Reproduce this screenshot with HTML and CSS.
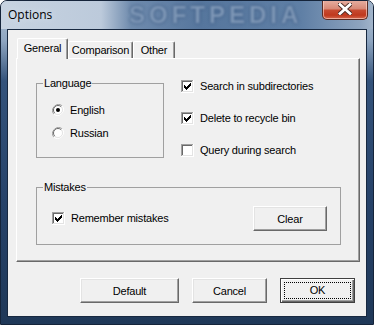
FILE: index.html
```html
<!DOCTYPE html>
<html lang="en">
<head>
    <meta charset="UTF-8">
    <title>Options</title>
    <link rel="stylesheet" href="styles.css">
</head>
<body>
    <div class="window">
        <div class="titlebar">
            <span class="watermark">SOFTPEDIA</span>
            <span class="title">Options</span>
            <button class="close">
                <svg width="14" height="12" viewBox="0 0 14 12">
                    <path d="M2 1.5 L12 10.5 M12 1.5 L2 10.5" stroke="#4a2a24" stroke-width="4.6" stroke-linecap="square"/>
                    <path d="M2 1.5 L12 10.5 M12 1.5 L2 10.5" stroke="#fff" stroke-width="2.8" stroke-linecap="square"/>
                </svg>
            </button>
        </div>
        <div class="client">
            <div class="tabs">
                <div class="tab active general">General</div>
                <div class="tab comparison">Comparison</div>
                <div class="tab other">Other</div>
            </div>
            <div class="page">
                <div class="top-row">
                    <fieldset class="group lang">
                        <legend>Language</legend>
                        <label class="option first">
                            <svg class="radio" width="12" height="12" viewBox="0 0 12 12">
                                <path d="M10.2 1.8 A6 6 0 0 0 1.8 10.2" fill="none" stroke="#a0a0a0"/>
                                <path d="M1.8 10.2 A6 6 0 0 0 10.2 1.8" fill="none" stroke="#fff"/>
                                <circle cx="6" cy="6" r="4.5" fill="#fff"/>
                                <path d="M9.2 2.8 A4.5 4.5 0 0 0 2.8 9.2" fill="none" stroke="#696969"/>
                                <path d="M2.8 9.2 A4.5 4.5 0 0 0 9.2 2.8" fill="none" stroke="#e3e3e3"/>
                                <circle cx="6" cy="6" r="2" fill="#000"/>
                            </svg>
                            English
                        </label>
                        <label class="option second">
                            <svg class="radio" width="12" height="12" viewBox="0 0 12 12">
                                <path d="M10.2 1.8 A6 6 0 0 0 1.8 10.2" fill="none" stroke="#a0a0a0"/>
                                <path d="M1.8 10.2 A6 6 0 0 0 10.2 1.8" fill="none" stroke="#fff"/>
                                <circle cx="6" cy="6" r="4.5" fill="#fff"/>
                                <path d="M9.2 2.8 A4.5 4.5 0 0 0 2.8 9.2" fill="none" stroke="#696969"/>
                                <path d="M2.8 9.2 A4.5 4.5 0 0 0 9.2 2.8" fill="none" stroke="#e3e3e3"/>
                            </svg>
                            Russian
                        </label>
                    </fieldset>
                    <div class="checks">
                        <label class="option">
                            <svg class="check" width="13" height="13" viewBox="0 0 13 13">
                                <rect width="13" height="13" fill="#fff"/>
                                <rect x="0" y="0" width="12" height="1" fill="#a0a0a0"/>
                                <rect x="0" y="0" width="1" height="12" fill="#a0a0a0"/>
                                <rect x="1" y="1" width="10" height="1" fill="#696969"/>
                                <rect x="1" y="1" width="1" height="10" fill="#696969"/>
                                <rect x="1" y="11" width="11" height="1" fill="#e3e3e3"/>
                                <rect x="11" y="1" width="1" height="11" fill="#e3e3e3"/>
                                <path d="M3 5h1v3h-1z M4 6h1v3h-1z M5 7h1v3h-1z M6 6h1v3h-1z M7 5h1v3h-1z M8 4h1v3h-1z M9 3h1v3h-1z" fill="#000"/>
                            </svg>
                            Search in subdirectories
                        </label>
                        <label class="option">
                            <svg class="check" width="13" height="13" viewBox="0 0 13 13">
                                <rect width="13" height="13" fill="#fff"/>
                                <rect x="0" y="0" width="12" height="1" fill="#a0a0a0"/>
                                <rect x="0" y="0" width="1" height="12" fill="#a0a0a0"/>
                                <rect x="1" y="1" width="10" height="1" fill="#696969"/>
                                <rect x="1" y="1" width="1" height="10" fill="#696969"/>
                                <rect x="1" y="11" width="11" height="1" fill="#e3e3e3"/>
                                <rect x="11" y="1" width="1" height="11" fill="#e3e3e3"/>
                                <path d="M3 5h1v3h-1z M4 6h1v3h-1z M5 7h1v3h-1z M6 6h1v3h-1z M7 5h1v3h-1z M8 4h1v3h-1z M9 3h1v3h-1z" fill="#000"/>
                            </svg>
                            Delete to recycle bin
                        </label>
                        <label class="option">
                            <svg class="check" width="13" height="13" viewBox="0 0 13 13">
                                <rect width="13" height="13" fill="#fff"/>
                                <rect x="0" y="0" width="12" height="1" fill="#a0a0a0"/>
                                <rect x="0" y="0" width="1" height="12" fill="#a0a0a0"/>
                                <rect x="1" y="1" width="10" height="1" fill="#696969"/>
                                <rect x="1" y="1" width="1" height="10" fill="#696969"/>
                                <rect x="1" y="11" width="11" height="1" fill="#e3e3e3"/>
                                <rect x="11" y="1" width="1" height="11" fill="#e3e3e3"/>
                            </svg>
                            Query during search
                        </label>
                    </div>
                </div>
                <fieldset class="group mistakes">
                    <legend>Mistakes</legend>
                    <div class="mistakes-row">
                        <label class="option">
                            <svg class="check" width="13" height="13" viewBox="0 0 13 13">
                                <rect width="13" height="13" fill="#fff"/>
                                <rect x="0" y="0" width="12" height="1" fill="#a0a0a0"/>
                                <rect x="0" y="0" width="1" height="12" fill="#a0a0a0"/>
                                <rect x="1" y="1" width="10" height="1" fill="#696969"/>
                                <rect x="1" y="1" width="1" height="10" fill="#696969"/>
                                <rect x="1" y="11" width="11" height="1" fill="#e3e3e3"/>
                                <rect x="11" y="1" width="1" height="11" fill="#e3e3e3"/>
                                <path d="M3 5h1v3h-1z M4 6h1v3h-1z M5 7h1v3h-1z M6 6h1v3h-1z M7 5h1v3h-1z M8 4h1v3h-1z M9 3h1v3h-1z" fill="#000"/>
                            </svg>
                            Remember mistakes
                        </label>
                        <button class="btn clear">Clear</button>
                    </div>
                </fieldset>
            </div>
            <div class="actions">
                <button class="btn default">Default</button>
                <button class="btn cancel">Cancel</button>
                <button class="btn ok"><span class="focus">OK</span></button>
            </div>
        </div>
    </div>
</body>
</html>
```

FILE: styles.css
```css
* {
    box-sizing: border-box;
}
body {
    margin: 0;
    font-family: "Liberation Sans", Arial, sans-serif;
    font-size: 11px;
    letter-spacing: -0.2px;
    color: #000;
}
.window {
    width: 374px;
    height: 325px;
    border: 1px solid #15243a;
    border-radius: 7px 7px 0 0;
    overflow: hidden;
    padding: 0 6px 7px;
    display: flex;
    flex-direction: column;
    background: linear-gradient(to bottom, #b4c4d6 0, #8ea5c0 40px, #34537b 80px, #264269 200px, #1f3858 100%);
}
.titlebar {
    height: 28px;
    margin: 0 -6px;
    padding-left: 7px;
    display: flex;
    align-items: flex-start;
    position: relative;
    background: linear-gradient(to right, #c7d3e1 0, #bccadb 100px, #6f8bad 130px, #56769d 200px, #5f7fa5 300px, #8ea4bf 360px, #a5b7cc 374px);
}
.watermark {
    position: absolute;
    left: 128px;
    top: 0;
    font-family: "Liberation Sans", Arial, sans-serif;
    font-weight: bold;
    font-size: 24px;
    line-height: 28px;
    letter-spacing: 4px;
    color: #7e97b6;
    filter: blur(1.3px);
    text-shadow: 0 0 3px #2c4a74;
}
.title {
    position: relative;
    font-family: "Open Sans", "Noto Sans", sans-serif;
    font-size: 12px;
    letter-spacing: 0;
    line-height: 16px;
    margin-top: 6px;
    text-shadow: 0 0 6px #dfe7f0;
}
.close {
    position: relative;
    margin: -1px 5px 0 auto;
    width: 46px;
    height: 20px;
    padding: 0;
    border: 1px solid #5a2c24;
    border-top: none;
    border-radius: 0 0 5px 5px;
    background: linear-gradient(to bottom, #e7b1a3 0, #d88a78 45%, #c64a30 55%, #c0391e 80%, #d4684e 100%);
    box-shadow: inset 0 0 0 1px rgba(255, 220, 210, 0.6);
    display: flex;
    align-items: center;
    justify-content: center;
}
.close svg {
    display: block;
    margin-top: -1px;
}
.client {
    flex: 1;
    background: #f0f0f0;
    border: 1px solid #172840;
    padding: 8px 6px 13px 8px;
    display: flex;
    flex-direction: column;
}
.tabs {
    display: flex;
    align-items: flex-end;
    height: 20px;
    padding-left: 1px;
}
.tab {
    height: 17px;
    padding-top: 2px;
    line-height: 13px;
    text-align: center;
    white-space: nowrap;
    border: 1px solid;
    border-color: #fff #696969 transparent #fff;
    border-bottom: none;
    border-radius: 2px 2px 0 0;
    box-shadow: inset -1px 0 #a0a0a0;
    background: #f0f0f0;
}
.tab.active {
    position: relative;
    z-index: 1;
    height: 21px;
    margin-bottom: -1px;
    padding-top: 3px;
}
.general {
    width: 51px;
}
.comparison {
    width: 65px;
}
.other {
    width: 42px;
}
.page {
    height: 204px;
    border: 1px solid;
    border-color: #fff #696969 #696969 #fff;
    box-shadow: inset -1px -1px #a0a0a0;
    padding: 18px 0 0 19px;
}
.top-row {
    display: flex;
    align-items: flex-start;
}
.group {
    margin: 0;
    min-width: 0;
    border: 1px solid #a0a0a0;
    padding: 0 0 0 6px;
}
.group legend {
    padding: 0 1px;
    line-height: 13px;
}
.lang {
    width: 128px;
    padding-bottom: 16px;
}
.option {
    display: flex;
    align-items: center;
    gap: 6px;
    height: 16px;
    line-height: 13px;
    white-space: nowrap;
}
.option svg {
    display: block;
    flex: none;
}
.lang .option {
    margin-left: 9px;
}
.lang .first {
    margin-top: 12px;
}
.lang .second {
    margin-top: 7px;
}
.checks {
    margin-left: 17px;
    padding-top: 1px;
    display: flex;
    flex-direction: column;
    gap: 16px;
}
.mistakes {
    width: 305px;
    margin-top: 23px;
    padding-bottom: 13px;
}
.mistakes-row {
    height: 25px;
    margin: 12px 13px 0 9px;
    display: flex;
    align-items: center;
    justify-content: space-between;
}
.btn {
    height: 25px;
    padding: 0;
    font: inherit;
    letter-spacing: inherit;
    color: #000;
    background: #f0f0f0;
    border: 1px solid;
    border-color: #fff #696969 #696969 #fff;
    box-shadow: inset -1px -1px #a0a0a0, inset 1px 1px #e3e3e3;
}
.clear {
    width: 74px;
}
.actions {
    display: flex;
    justify-content: flex-end;
    gap: 13px;
    margin: 16px 5px 0 0;
}
.default {
    width: 99px;
}
.cancel {
    width: 75px;
}
.ok {
    width: 75px;
    border: 1px solid #404040;
    box-shadow: inset 1px 1px #fff, inset -1px -1px #696969, inset -2px -2px #a0a0a0;
    display: flex;
    align-items: center;
    justify-content: center;
}
.ok .focus {
    display: block;
    width: 67px;
    height: 17px;
    line-height: 15px;
    border: 1px dotted #000;
}
```
